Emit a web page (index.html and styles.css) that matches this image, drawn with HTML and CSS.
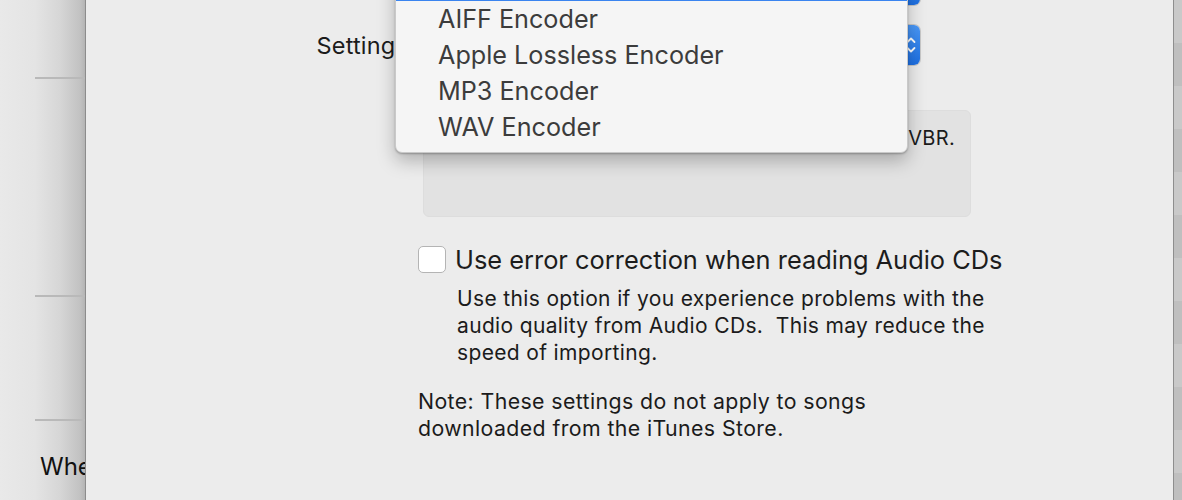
FILE: index.html
```html
<!DOCTYPE html>
<html>
<head>
<meta charset="utf-8">
<link rel="stylesheet" href="styles.css">
</head>
<body>
<div class="screen">
  <aside class="backwin">
    <div class="bw-row bw-r1"></div>
    <div class="bw-row bw-r2"></div>
    <div class="bw-row bw-r3"></div>
    <div class="bw-last">Whe</div>
  </aside>

  <main class="sheet">
    <div class="form">
      <div class="label import-label">Import Using:</div>
      <div class="popup import-popup"><span class="cap"></span></div>

      <div class="label settings-label">Settings:</div>
      <div class="popup settings-popup">
        <span class="popup-text">Custom...</span>
        <span class="cap">
          <svg width="10" height="18" viewBox="0 0 10 18"><path d="M1.5 6 L5 2.5 L8.5 6 M1.5 12 L5 15.5 L8.5 12" fill="none" stroke="#fff" stroke-width="1.8" stroke-linecap="round" stroke-linejoin="round"/></svg>
        </span>
      </div>

      <div class="details"><span class="details-text">Details: 256 kbps (stereo), 128 kbps (mono), 44.100 kHz, VBR.</span></div>

      <label class="check-row">
        <span class="checkbox"></span>
        <span class="check-text">Use error correction when reading Audio CDs</span>
      </label>
      <p class="desc">Use this option if you experience problems with the audio quality from Audio CDs.&nbsp; This may reduce the speed of importing.</p>

      <p class="note">Note: These settings do not apply to songs<br>downloaded from the iTunes Store.</p>
    </div>

    <div class="menu">
      <div class="menu-item selected">AAC Encoder</div>
      <div class="menu-item">AIFF Encoder</div>
      <div class="menu-item">Apple Lossless Encoder</div>
      <div class="menu-item">MP3 Encoder</div>
      <div class="menu-item">WAV Encoder</div>
    </div>
  </main>

  <aside class="rightstrip"></aside>
</div>
</body>
</html>
```

FILE: styles.css
```css
* { box-sizing: border-box; }
html, body { margin: 0; padding: 0; }
body {
  width: 1182px;
  height: 500px;
  overflow: hidden;
  background: #ececec;
  font-family: "Inter", "Liberation Sans", sans-serif;
  color: #1b1b1b;
}
.screen {
  display: flex;
  width: 1182px;
  height: 500px;
}

/* background window on the left */
.backwin {
  width: 85px;
  flex: none;
  background: linear-gradient(to right, #e9e9e9 0px, #e4e4e4 35px, #d6d6d6 60px, #c2c2c2 80px, #b4b4b4 85px);
  display: flex;
  flex-direction: column;
  padding-left: 35px;
}
.bw-row { border-bottom: 2px solid #b9b9b9; }
.bw-r1 { height: 79px; }
.bw-r2 { height: 218px; }
.bw-r3 { height: 124px; }
.bw-last {
  padding: 31px 0 0 5px;
  font-size: 24px;
  color: #111;
  white-space: nowrap;
  overflow: hidden;
}

/* the sheet */
.sheet {
  position: relative;
  width: 1088px;
  flex: none;
  background: #ececec;
  border-left: 1px solid #8c8c8c;
}
.form {
  display: grid;
  grid-template-columns: 332px 1fr;
  margin-top: -30px;
}
.label {
  text-align: right;
  font-size: 23.5px;
  letter-spacing: 0.2px;
  padding-right: 3px;
  align-self: center;
}
.import-label { visibility: hidden; }
.settings-label { margin-top: 20px; }
.popup {
  height: 35px;
  width: 500px;
  margin-left: 2px;
  background: #fff;
  border-radius: 6px;
  box-shadow: 0 0 0 1px #c8c8c8;
  display: flex;
  align-items: center;
}
.settings-popup { height: 40px; margin-top: 20px; }
.popup-text { padding-left: 12px; font-size: 22px; }
.cap {
  margin-left: auto;
  width: 18px;
  height: 100%;
  border-radius: 0 6px 6px 0;
  background: linear-gradient(#4a98f7, #1d6fe2);
  display: flex;
  align-items: center;
  justify-content: center;
}
.details {
  grid-column: 2;
  margin: 45px 0 0 5px;
  width: 548px;
  height: 107px;
  background: #e2e2e2;
  border: 1px solid #dddddd;
  border-radius: 6px;
  padding: 15px 15px 0 14px;
  font-size: 20px;
  letter-spacing: 0.3px;
  display: flex;
  justify-content: flex-end;
  align-items: flex-start;
  white-space: nowrap;
  overflow: hidden;
}
.check-row {
  grid-column: 2;
  display: flex;
  align-items: center;
  margin-top: 29px;
  height: 27px;
}
.checkbox {
  width: 28px;
  height: 27px;
  background: #fff;
  border: 1px solid #b4b4b4;
  border-radius: 5px;
  flex: none;
}
.check-text {
  margin-left: 9px;
  font-size: 25.4px;
  color: #1c1c1c;
  white-space: nowrap;
}
.desc {
  grid-column: 2;
  margin: 12px 0 0 39px;
  width: 550px;
  font-size: 21px;
  letter-spacing: 0.35px;
  line-height: 27px;
}
.note {
  grid-column: 2;
  margin: 22px 0 0 0;
  font-size: 21.3px;
  letter-spacing: 0.4px;
  line-height: 27px;
}

/* the open pop-up menu */
.menu {
  position: absolute;
  left: 309px;
  top: -36px;
  width: 513px;
  background: #f5f5f5;
  border: 1px solid #c9c9c9;
  border-radius: 0 0 7px 7px;
  box-shadow: 0 8px 18px rgba(0,0,0,0.25), 0 1px 2px rgba(0,0,0,0.25);
  padding-bottom: 7px;
}
.menu-item {
  height: 36px;
  line-height: 36px;
  padding-left: 42px;
  font-size: 25.2px;
  color: #3c3c3c;
}
.menu-item.selected {
  background: #3a84ef;
  color: #fff;
}

/* strip on the right */
.rightstrip {
  flex: 1;
  border-left: 1px solid #8e8e8e;
  background: repeating-linear-gradient(#c9c9c9 0 43px, #bfbfbf 43px 86px);
}
```
